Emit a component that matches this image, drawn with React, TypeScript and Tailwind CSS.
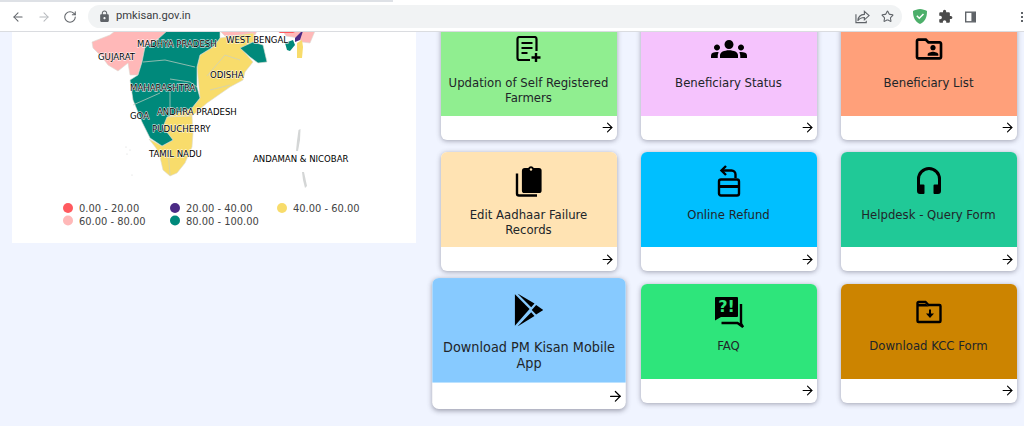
import { ArrowLeft, ArrowRight, RotateCw, Star } from "lucide-react";
import { MdExtension, MdGroups, MdLock, MdOutlineFolderShared } from "react-icons/md";
import type { ReactNode } from "react";

const svgFont = "'DejaVu Sans Condensed', 'DejaVu Sans', sans-serif";

const PostAddIcon = () => (
  <svg width="26" height="27" viewBox="0 0 26 27" fill="none" stroke="currentColor" strokeWidth="2.200">
    <path d="M14 24H3.500a2 2 0 0 1-2-2V3a2 2 0 0 1 2-2h15a2 2 0 0 1 2 2v12" />
    <path d="M5.500 7h11M5.500 12h11M5.500 17h6" />
    <path d="M20 17v9M15.500 21.500h9" strokeWidth="2.400" />
  </svg>
);

const ClipboardStack = () => (
  <svg width="30" height="32" viewBox="0 0 30 32" fill="currentColor">
    <path d="M11 3h3.200a3.200 3.200 0 0 1 5.600 0H25a2.600 2.600 0 0 1 2.600 2.600v19.800a2.600 2.600 0 0 1-2.600 2.600H10.500a2.600 2.600 0 0 1-2.600-2.600V6a3 3 0 0 1 3.100-3z" />
    <circle cx="17" cy="4.500" r="1.200" fill="#FFE3B3" />
    <path d="M3 8.500v20a2 2 0 0 0 2 2h18" fill="none" stroke="currentColor" strokeWidth="2.400" />
  </svg>
);

const RefundIcon = () => (
  <svg width="24" height="32" viewBox="0 0 24 32" fill="none" stroke="currentColor" strokeWidth="2.400">
    <path d="M9 1 4.500 5.500 9 10" />
    <path d="M5 5.500h9.500a4 4 0 0 1 4 4v3.500" />
    <rect x="2" y="14.500" width="20" height="16" rx="2" />
    <path d="M2 21.500h20" strokeWidth="3" />
  </svg>
);

const HeadphoneIcon = () => (
  <svg width="26" height="30" viewBox="0 0 26 30" fill="currentColor">
    <path d="M1 25V13a12 12 0 0 1 24 0v12h-3V13a9 9 0 0 0-18 0v12z" />
    <path d="M1 18.500h6.500a1 1 0 0 1 1 1V27a1 1 0 0 1-1 1H4a3 3 0 0 1-3-3zM25 18.500h-6.500a1 1 0 0 0-1 1V27a1 1 0 0 0 1 1H22a3 3 0 0 0 3-3z" />
  </svg>
);

const PlayStoreIcon = () => (
  <svg width="26" height="30" viewBox="0 0 26 30" fill="currentColor">
    <path d="M0 .500 13.500 14.200 0 29.500z" />
    <path d="M2.500 0 18 9.200 15 12.500zM2.500 30 18 20.500 15 17.200zM19.500 10.500 26 15l-6.500 4.200-4-4.200z" />
  </svg>
);

const FaqIcon = () => (
  <svg width="30" height="32" viewBox="0 0 30 32" fill="currentColor">
    <path d="M2 1h21a1 1 0 0 1 1 1v18a1 1 0 0 1-1 1H7l-6 3.500V2a1 1 0 0 1 1-1z" />
    <path d="M27 8v19.500l2 3.500-5.500-4H7.500" fill="none" stroke="currentColor" strokeWidth="2.400" />
    <text x="12.500" y="16" textAnchor="middle" fontSize="16" fontWeight="700" fill="#2EE57B" fontFamily="'DejaVu Sans', sans-serif">
      ?!
    </text>
  </svg>
);

const FolderDownloadIcon = () => (
  <svg width="26" height="24" viewBox="0 0 26 24" fill="none" stroke="currentColor" strokeWidth="2.400">
    <path d="M1.500 21V3a1 1 0 0 1 1-1h7l3 3h11a1 1 0 0 1 1 1v15a1 1 0 0 1-1 1h-21a1 1 0 0 1-1-1z" />
    <path d="M1 4h9l2.500 2.500H1z" fill="currentColor" stroke="none" />
    <path d="M14 9.500v5" strokeWidth="2" />
    <path d="M10 13.500h8L14 18z" fill="currentColor" stroke="none" />
  </svg>
);

function Card({
  color,
  icon,
  title,
  hovered,
}: {
  color: string;
  icon: ReactNode;
  title: string;
  hovered?: boolean;
}) {
  return (
    <div
      className={`flex h-[119px] flex-col overflow-hidden rounded-md bg-white shadow-[0_1px_5px_rgba(60,60,80,0.45)] ${
        hovered ? "relative z-[1] scale-[1.1]" : ""
      }`}
    >
      <div className={`flex h-[95px] flex-col items-center px-[7px] text-center ${color}`}>
        <div className="flex h-[54.500px] items-center justify-center pt-[3px] text-black">{icon}</div>
        <p className="text-[13px] leading-[15px] text-[#212529]">{title}</p>
      </div>
      <div className="flex flex-1 items-center justify-end pr-[2px] text-black">
        <ArrowRight size={15} strokeWidth={1.750} />
      </div>
    </div>
  );
}

function IndiaMap() {
  const labels: [string, number, number][] = [
    ["MADHYA PRADESH", 137, 46.500],
    ["WEST BENGAL", 226, 43],
    ["GUJARAT", 98, 60],
    ["ODISHA", 210, 78],
    ["MAHARASHTRA", 130, 91],
    ["ANDHRA PRADESH", 157, 115],
    ["GOA", 130, 119],
    ["PUDUCHERRY", 152, 132],
    ["TAMIL NADU", 149, 157],
    ["ANDAMAN & NICOBAR", 253, 162],
  ];
  const legend: [string, string, number, number][] = [
    ["#FF5A5F", "0.00 - 20.00", 68, 208],
    ["#4B2A85", "20.00 - 40.00", 175, 208],
    ["#F8DC6B", "40.00 - 60.00", 282, 208],
    ["#FFB8B8", "60.00 - 80.00", 68, 220.500],
    ["#00897B", "80.00 - 100.00", 175, 220.500],
  ];
  return (
    <svg width="404" height="212" viewBox="12 31 404 212" className="block">
      <g stroke="#dcdcd4" strokeWidth="0.600">
        <polygon fill="#FFB8B8" points="92,42 110,35 115,31 170,31 145,47 142,62 138,75 130,75 128,63 118,71 108,65 102,57 93,48" />
        <polygon fill="#FFB8B8" points="220,31 257,31 255,35 225,36" />
        <polygon fill="#FFB8B8" points="283,31 315,31 310,43 302,42 298,38 286,36" />
        <polygon fill="#F8DC6B" points="220,38 253,33 257,40 241,48 253,62 245,72 243,80 230,87 207,103 192,116 165,117 192,108 200,98 197,67 200,55 213,47" />
        <polygon fill="#F8DC6B" points="165,117 192,116 193,133 192,147 185,163 177,173 170,176 163,170 160,157 156,148 149,139 162,146 173,140 163,127" />
        <polygon fill="#00897B" points="167,31 220,31 220,38 213,47 200,55 197,67 197,87 200,98 192,108 167,117 163,127 173,140 162,146 150,138 142,122 133,100 130,80 138,75 142,62 145,47 157,40" />
        <polygon fill="#00897B" points="240,48 253,42 263,45 267,62 258,63 250,57" />
      </g>
      <polygon fill="#00897B" points="285,43 293,40 295,45 290,51 287,50" />
      <polygon fill="#4B2A85" points="295,38 302,31 303,31 300,40 295,42" />
      <polygon fill="#F8DC6B" points="297,43 302,40 303,47 302,58 297,58" />
      <polygon fill="#FF5A5F" points="277,31 297,31 293,33 280,33" />
      <g fill="none" stroke="#c9d0c4" strokeWidth="0.700">
        <path d="M143 62 165 60 195 67M170 79 190 82 197 87M170 92 170 116M133 105 160 93M207 76 225 55 240 60M210 90 230 85" />
        <path d="M168 150 170 175" />
      </g>
      <g fill="#d4d6d6">
        <path d="M298.500 130 300.500 129 300 140 298 151 296 151 297 141z" />
        <path d="M302 172 304 172 307 186 305 188 303 180z" />
        <circle cx="126" cy="147" r="0.600" />
        <circle cx="130" cy="150" r="0.600" />
        <circle cx="127" cy="154" r="0.600" />
        <circle cx="132" cy="175" r="0.600" />
      </g>
      <g fontFamily={svgFont} fontSize="9.500" fill="#000000" stroke="#ffffff" strokeWidth="0.800" paintOrder="stroke">
        {labels.map(([name, x, y]) => (
          <text key={name} x={x} y={y}>
            {name}
          </text>
        ))}
      </g>
      <g fontFamily={svgFont} fontSize="11" fill="#444444">
        {legend.map(([fill, name, x, y]) => (
          <g key={name}>
            <circle cx={x} cy={y} r="5" fill={fill} />
            <text x={x + 11} y={y + 4}>
              {name}
            </text>
          </g>
        ))}
      </g>
    </svg>
  );
}

export default function App() {
  return (
    <div className="flex h-[426px] w-[1024px] flex-col overflow-hidden bg-[#f0f4ff] [font-family:'DejaVu_Sans_Condensed','DejaVu_Sans',sans-serif]">
      <header className="relative z-10 flex h-[32px] flex-col bg-white">
        <div className="flex h-[2px]">
          <div className="w-[393px] bg-[#dee1e6]" />
        </div>
        <div className="flex flex-1 items-center border-b border-[#dadce0] text-[#5f6368]">
          <div className="flex w-[88px] items-center gap-[12px] pl-[11px]">
            <ArrowLeft size={14} strokeWidth={1.800} />
            <ArrowRight size={14} strokeWidth={1.800} className="text-[#b6b9bd]" />
            <RotateCw size={14} strokeWidth={1.800} />
          </div>
          <div className="flex h-[23px] w-[814px] items-center rounded-full bg-[#f1f3f4] pl-[10px] pr-[8px]">
            <MdLock size={13} />
            <span className="ml-[5px] flex-1 [font-family:Roboto,sans-serif] text-[11.200px] text-[#3c4043]">pmkisan.gov.in</span>
            <svg width="15" height="14" viewBox="0 0 16 14" fill="none" stroke="currentColor" strokeWidth="1.200" className="mr-[11px]">
              <path d="M10 1 15 5.500 10 10V7.500C6.500 7.500 4.500 8.500 3 11c.300-4 2.500-6.500 7-6.800z" />
              <path d="M1 4v9h11v-2" />
            </svg>
            <Star size={13} strokeWidth={2} />
          </div>
          <svg width="14" height="15" viewBox="0 0 14 15" className="ml-[11px]">
            <path d="M7 0C4.500 0 2 1 0 2c0 6 1.500 10.500 7 13 5.500-2.500 7-7 7-13-2-1-4.500-2-7-2z" fill="#4caf6a" />
            <path d="M3.800 6.800 6.300 9.300 10.500 5" fill="none" stroke="#fff" strokeWidth="1.500" />
          </svg>
          <MdExtension size={15} className="ml-[11px] text-[#4a4a4a]" />
          <svg width="11" height="12" viewBox="0 0 12 12" className="ml-[12px] text-[#5f6368]">
            <rect x="0.750" y="0.750" width="10.500" height="10.500" fill="none" stroke="currentColor" strokeWidth="1.500" />
            <rect x="7" y="1" width="4" height="10" fill="currentColor" />
          </svg>
          <span className="ml-[45px] flex flex-col gap-[2px]">
            <span className="size-[2px] bg-[#5f6368]" />
            <span className="size-[2px] bg-[#5f6368]" />
            <span className="size-[2px] bg-[#5f6368]" />
          </span>
        </div>
      </header>
      <main className="flex flex-1 items-start pl-[12px]">
        <section className="-mt-[1px] h-[212px] w-[404px] bg-white">
          <IndiaMap />
        </section>
        <section className="-mt-[11.500px] ml-[24.500px] grid grid-cols-[176px_176px_176px] gap-x-6 gap-y-[12.500px]">
          <Card color="bg-[#90EE90]" icon={<PostAddIcon />} title="Updation of Self Registered Farmers" />
          <Card color="bg-[#F5C3FD]" icon={<MdGroups size={36} />} title="Beneficiary Status" />
          <Card color="bg-[#FFA07A]" icon={<MdOutlineFolderShared size={32} />} title="Beneficiary List" />
          <Card color="bg-[#FFE3B3]" icon={<ClipboardStack />} title="Edit Aadhaar Failure Records" />
          <Card color="bg-[#00BFFF]" icon={<RefundIcon />} title="Online Refund" />
          <Card color="bg-[#20C997]" icon={<HeadphoneIcon />} title="Helpdesk - Query Form" />
          <Card color="bg-[#87CAFF]" icon={<PlayStoreIcon />} title="Download PM Kisan Mobile App" hovered />
          <Card color="bg-[#2EE57B]" icon={<FaqIcon />} title="FAQ" />
          <Card color="bg-[#CC8400]" icon={<FolderDownloadIcon />} title="Download KCC Form" />
        </section>
      </main>
    </div>
  );
}
